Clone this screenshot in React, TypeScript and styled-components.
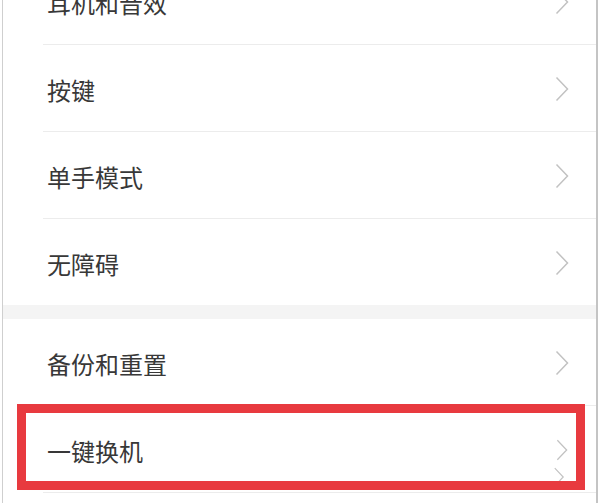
import styled, { createGlobalStyle } from 'styled-components';

const GlobalStyle = createGlobalStyle`
  html, body {
    margin: 0;
    padding: 0;
    background: #ffffff;
    overflow: hidden;
  }
  * {
    box-sizing: border-box;
  }
`;

const Frame = styled.div`
  width: 600px;
  height: 503px;
  overflow: hidden;
  background: #ffffff;
  padding-left: 2px;
`;

const Screen = styled.div`
  width: 596px;
  height: 100%;
  border-left: 1px solid #cfcfcf;
  border-right: 2px solid #c4c4c4;
  display: flex;
  flex-direction: column;
  font-family: "Noto Sans CJK SC", "Noto Sans", sans-serif;
`;

const Group = styled.div<{ $offset?: number }>`
  background: #ffffff;
  margin-top: ${(p) => p.$offset ?? 0}px;
  flex-shrink: 0;
`;

const GroupGap = styled.div`
  height: 14px;
  background: #f4f4f4;
  flex-shrink: 0;
`;

const Row = styled.div`
  position: relative;
  padding-left: 40px;
`;

const RowInner = styled.div<{ $last?: boolean }>`
  height: ${(p) => (p.$last ? 86 : 87)}px;
  display: flex;
  align-items: center;
  padding: 2px 27px 0 4px;
  border-bottom: ${(p) => (p.$last ? 'none' : '1px solid #ececec')};
`;

const Label = styled.span`
  flex: 1;
  font-size: 24px;
  color: #383838;
`;

const Chevron = styled.svg`
  width: 14px;
  height: 26px;
  display: block;
`;

const Highlight = styled.div`
  position: absolute;
  left: 14px;
  right: 11px;
  top: -2px;
  height: 86px;
  border: 9px solid #e83a3f;
  pointer-events: none;
  z-index: 2;
`;

const GhostChevron = styled.div`
  position: absolute;
  right: 30px;
  top: 61px;
  z-index: 1;
`;

function Arrow({ h = 26 }: { h?: number }) {
  return (
    <Chevron viewBox="0 0 14 26" style={{ height: h }}>
      <polyline points="1.5,1.5 12.5,13 1.5,24.5" fill="none" stroke="#c2c2c2" strokeWidth="1.5" />
    </Chevron>
  );
}

const first = ['耳机和音效', '按键', '单手模式', '无障碍'];

export default function App() {
  return (
    <>
      <GlobalStyle />
      <Frame>
        <Screen>
          <Group $offset={-42}>
            {first.map((t, i) => (
              <Row key={t}>
                <RowInner $last={i === first.length - 1}>
                  <Label>{t}</Label>
                  <Arrow />
                </RowInner>
              </Row>
            ))}
          </Group>
          <GroupGap />
          <Group>
            <Row>
              <RowInner>
                <Label>备份和重置</Label>
                <Arrow />
              </RowInner>
            </Row>
            <Row>
              <RowInner>
                <Label>一键换机</Label>
                <Arrow h={22} />
              </RowInner>
              <GhostChevron>
                <Arrow h={20} />
              </GhostChevron>
              <Highlight />
            </Row>
          </Group>
        </Screen>
      </Frame>
    </>
  );
}
